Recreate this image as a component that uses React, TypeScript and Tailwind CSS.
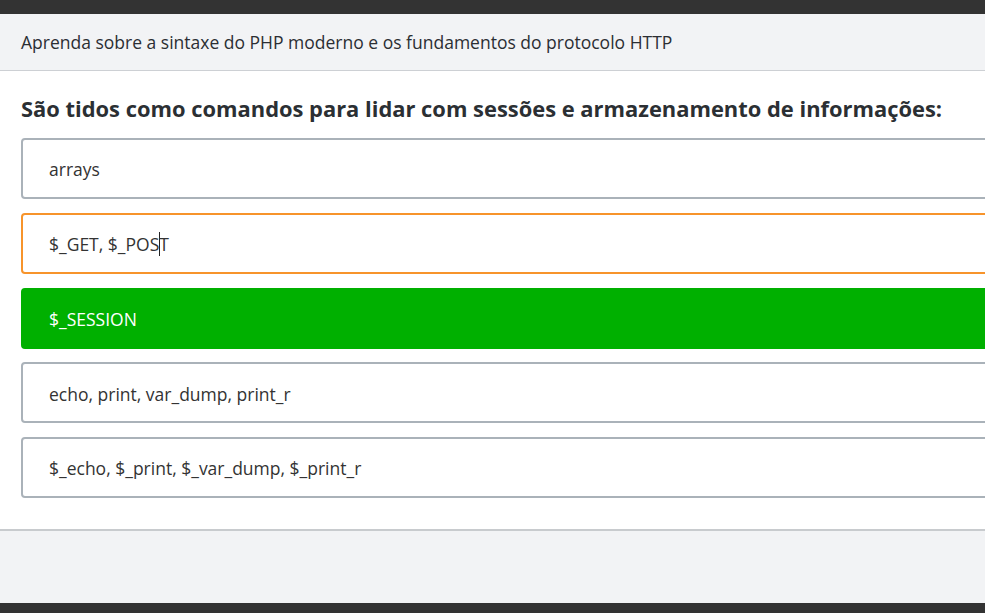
const options = [
  { text: "arrays", state: "idle" },
  { text: "$_GET, $_POST", state: "focus" },
  { text: "$_SESSION", state: "correct" },
  { text: "echo, print, var_dump, print_r", state: "idle" },
  { text: "$_echo, $_print, $_var_dump, $_print_r", state: "idle" },
];

const Option = ({ text, state }: { text: string; state: string }) => {
  const base =
    "flex items-center h-[61px] w-[1000px] rounded-[4px] pl-[26px] pt-[2px] text-[17.5px]";
  if (state === "correct") {
    return (
      <div className={`${base} bg-[#00b000] text-white border-2 border-[#00b000]`}>
        {text}
      </div>
    );
  }
  if (state === "focus") {
    // caret sits before the last letter
    return (
      <div className={`${base} bg-white text-[#333] border-2 border-[#f7942b]`}>
        {text.slice(0, -1)}
        <span className="inline-block w-px h-[24px] bg-[#222] -mr-px" />
        {text.slice(-1)}
      </div>
    );
  }
  return (
    <div className={`${base} bg-white text-[#333] border-2 border-[#aab2b9]`}>
      {text}
    </div>
  );
};

export default function App() {
  return (
    <div
      className="w-[985px] h-[613px] overflow-hidden flex flex-col bg-[#f2f3f5]"
      style={{ fontFamily: '"Open Sans", "Noto Sans", sans-serif' }}
    >
      <div className="h-[14px] bg-[#333333] shrink-0" />
      <div className="h-[57px] shrink-0 flex items-center px-[21px] border-b border-[#cdd0d4] text-[17.5px] text-[#2b2e33]">
        Aprenda sobre a sintaxe do PHP moderno e os fundamentos do protocolo HTTP
      </div>
      <div className="bg-white px-[21px] pt-[24px] pb-[31px] border-b-2 border-[#c8cbce]">
        <h2 className="text-[21.9px] font-bold text-[#2b2f33] leading-[28px] mb-[15px] whitespace-nowrap">
          São tidos como comandos para lidar com sessões e armazenamento de informações:
        </h2>
        <div className="flex flex-col gap-[13.75px]">
          {options.map((o) => (
            <Option key={o.text} text={o.text} state={o.state} />
          ))}
        </div>
      </div>
      <div className="flex-1" />
      <div className="h-[10px] bg-[#333333] shrink-0" />
    </div>
  );
}
